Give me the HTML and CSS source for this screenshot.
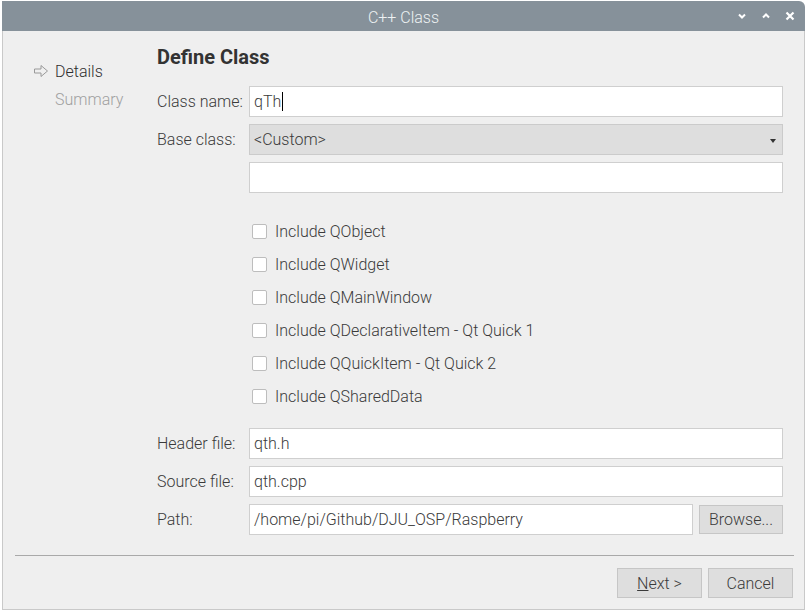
FILE: index.html
```html
<!DOCTYPE html>
<html>
<head>
<meta charset="utf-8">
<link rel="stylesheet" href="styles.css">
</head>
<body>
<div class="window">
  <div class="titlebar">
    <div class="title">C++ Class</div>
    <div class="controls">
      <svg class="ctl" width="10" height="8" viewBox="0 0 10 8"><path d="M2 2.5 L5 5.5 L8 2.5" fill="none" stroke="#fff" stroke-width="2"/></svg>
      <svg class="ctl" width="10" height="8" viewBox="0 0 10 8"><path d="M2 5.5 L5 2.5 L8 5.5" fill="none" stroke="#fff" stroke-width="2"/></svg>
      <svg class="ctl" width="10" height="10" viewBox="0 0 10 10"><path d="M1.5 1.5 L8.5 8.5 M8.5 1.5 L1.5 8.5" fill="none" stroke="#fff" stroke-width="2.2"/></svg>
    </div>
  </div>
  <div class="body">
    <div class="top">
      <div class="sidebar">
        <div class="nav current">
          <svg class="arrow" width="16" height="14" viewBox="0 0 16 14"><path d="M1.5 5 H8 V1.5 L14.5 7 L8 12.5 V9 H1.5 Z" fill="none" stroke="#999" stroke-width="1" stroke-linejoin="round"/></svg>
          <span>Details</span>
        </div>
        <div class="nav pending"><span>Summary</span></div>
      </div>
      <div class="main">
        <div class="heading">Define Class</div>
        <div class="fields">
          <div class="row">
            <label>Class name:</label>
            <div class="input"><span>qTh</span><span class="caret"></span></div>
          </div>
          <div class="row">
            <label>Base class:</label>
            <div class="combo"><span>&lt;Custom&gt;</span><span class="tri"></span></div>
          </div>
          <div class="row">
            <label></label>
            <div class="input"></div>
          </div>
        </div>
        <div class="checks">
          <div class="check"><span class="box"></span><span>Include QObject</span></div>
          <div class="check"><span class="box"></span><span>Include QWidget</span></div>
          <div class="check"><span class="box"></span><span>Include QMainWindow</span></div>
          <div class="check"><span class="box"></span><span>Include QDeclarativeItem - Qt Quick 1</span></div>
          <div class="check"><span class="box"></span><span>Include QQuickItem - Qt Quick 2</span></div>
          <div class="check"><span class="box"></span><span>Include QSharedData</span></div>
        </div>
        <div class="fields files">
          <div class="row">
            <label>Header file:</label>
            <div class="input"><span>qth.h</span></div>
          </div>
          <div class="row">
            <label>Source file:</label>
            <div class="input"><span>qth.cpp</span></div>
          </div>
          <div class="row">
            <label>Path:</label>
            <div class="input path"><span>/home/pi/Github/DJU_OSP/Raspberry</span></div>
            <div class="btn browse">Browse...</div>
          </div>
        </div>
      </div>
    </div>
    <div class="sep"></div>
    <div class="buttons">
      <div class="btn"><u>N</u>ext &gt;</div>
      <div class="btn">Cancel</div>
    </div>
  </div>
</div>
</body>
</html>
```

FILE: styles.css
```css
html, body {
  margin: 0;
  padding: 0;
  background: #ffffff;
}
body {
  font-family: Roboto, "Liberation Sans", sans-serif;
  font-size: 16px;
  font-weight: 300;
  color: #3a3a3a;
}
.window {
  margin: 1px 0 0 2px;
  width: 803px;
  height: 609px;
  display: flex;
  flex-direction: column;
  box-sizing: border-box;
}
.titlebar {
  height: 30px;
  background: #86919a;
  border-top-right-radius: 6px;
  display: flex;
  align-items: center;
  justify-content: center;
  position: relative;
}
.title {
  color: #eef1f3;
  font-size: 16px;
  font-weight: 300;
  padding-top: 2px;
}
.controls {
  position: absolute;
  right: 10px;
  top: 0;
  height: 30px;
  display: flex;
  align-items: center;
  gap: 14px;
}
.body {
  flex: 1;
  background: #efefef;
  border-left: 1px solid #c9c9c9;
  border-right: 1px solid #c9c9c9;
  border-bottom: 1px solid #c9c9c9;
  display: flex;
  flex-direction: column;
}
.top {
  display: flex;
  flex: 1;
}
.sidebar {
  width: 154px;
  padding-top: 26px;
  box-sizing: border-box;
}
.nav {
  height: 28px;
  display: flex;
  align-items: center;
  padding-left: 52px;
  position: relative;
}
.nav .arrow {
  position: absolute;
  left: 30px;
  top: 7px;
}
.nav.current { color: #2e2e2e; }
.nav.pending { color: #a0a0a0; }
.main {
  width: 626px;
  padding-top: 14px;
}
.heading {
  font-size: 20px;
  font-weight: 700;
  color: #333;
  line-height: 24px;
  height: 24px;
}
.fields {
  margin-top: 17px;
  display: flex;
  flex-direction: column;
  gap: 7px;
}
.row {
  display: flex;
  align-items: center;
  height: 31px;
}
.row label {
  width: 92px;
  flex: none;
}
.input, .combo {
  flex: 1;
  height: 31px;
  box-sizing: border-box;
  border: 1px solid #cfcfcf;
  background: #fff;
  display: flex;
  align-items: center;
  padding-left: 4px;
}
.caret {
  display: inline-block;
  width: 1px;
  height: 19px;
  background: #000;
  margin-left: 1px;
}
.combo {
  background: #dedede;
  border-color: #cbcbcb;
  justify-content: space-between;
  padding-right: 6px;
}
.tri {
  width: 0;
  height: 0;
  border-left: 3px solid transparent;
  border-right: 3px solid transparent;
  border-top: 4px solid #333;
  margin-top: 2px;
}
.checks {
  margin-top: 22px;
  display: flex;
  flex-direction: column;
}
.check {
  height: 33px;
  display: flex;
  align-items: center;
  padding-left: 95px;
}
.box {
  width: 15px;
  height: 15px;
  box-sizing: border-box;
  border: 1px solid #bdbdbd;
  background: #fff;
  border-radius: 2px;
  margin-right: 8px;
}
.files {
  margin-top: 15px;
}
.path {
  flex: none;
  width: 444px;
}
.btn {
  height: 30px;
  box-sizing: border-box;
  border: 1px solid #c6c6c6;
  background: #dedede;
  display: flex;
  align-items: center;
  justify-content: center;
}
.browse {
  width: 84px;
  margin-left: 6px;
  height: 29px;
}
.sep {
  height: 1px;
  background: #a9a9a9;
  margin: 0 10px 12px 12px;
}
.buttons {
  display: flex;
  justify-content: flex-end;
  gap: 6px;
  padding-right: 11px;
  height: 41px;
}
.buttons .btn {
  width: 85px;
}
```
